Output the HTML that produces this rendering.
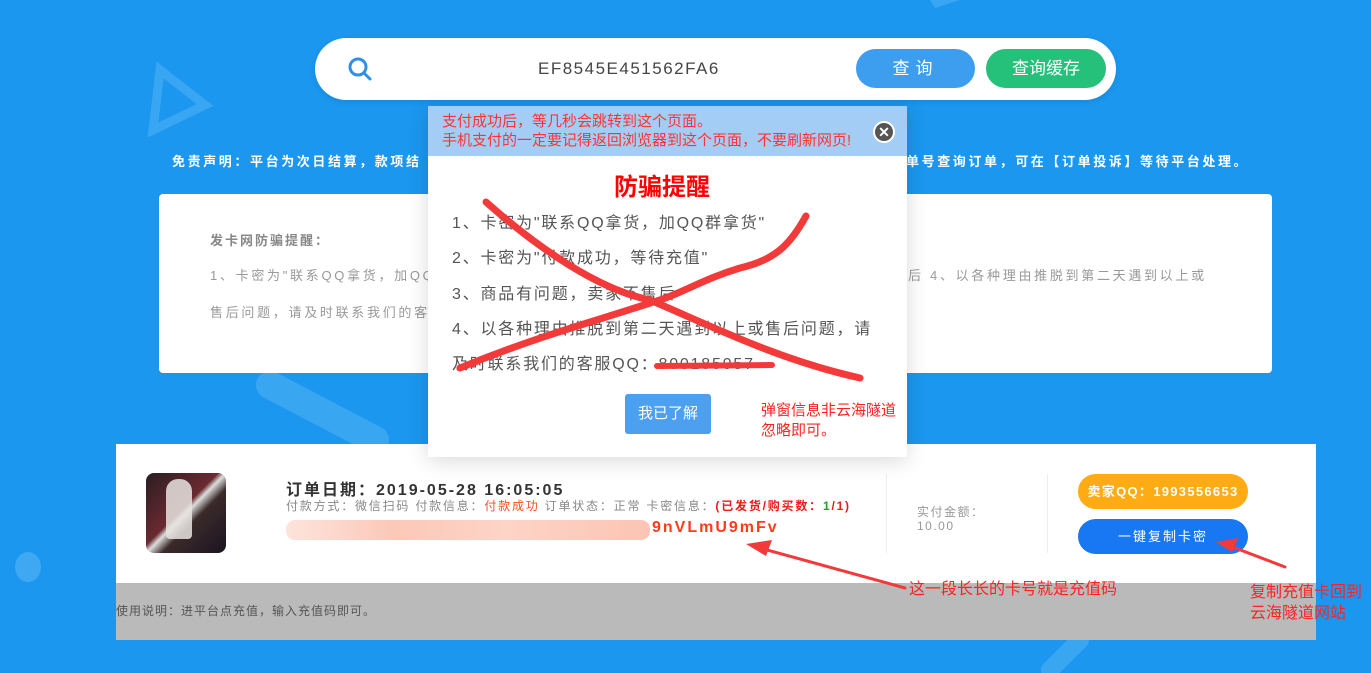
<!DOCTYPE html>
<html><head><meta charset="utf-8"><style>
*{margin:0;padding:0;box-sizing:border-box}
body{width:1371px;height:673px;overflow:hidden;background:#1b97ef;font-family:"Liberation Sans","Noto Sans CJK SC",sans-serif;position:relative}
.a{position:absolute;white-space:nowrap}
</style></head><body>
<svg class="a" style="left:0;top:0" width="1371" height="673">
<polygon points="160,70 205,105 153,130" fill="none" stroke="#4cb0f5" stroke-width="9" opacity=".6"/>
<line x1="270" y1="385" x2="375" y2="440" stroke="#4db0f3" stroke-width="28" stroke-linecap="round" opacity=".6"/>
<ellipse cx="28" cy="567" rx="13" ry="15" fill="#4db0f3" opacity=".7"/>
<line x1="1050" y1="670" x2="1080" y2="640" stroke="#4db0f3" stroke-width="18" stroke-linecap="round" opacity=".6"/>
<polygon points="930,0 960,0 935,8" fill="#4db0f3" opacity=".6"/>
</svg>
<div class="a" style="left:315px;top:38px;width:801px;height:62px;background:#fff;border-radius:31px;box-shadow:0 2px 6px rgba(0,0,0,.1)"></div>
<svg class="a" style="left:347px;top:56px" width="26" height="26"><circle cx="11" cy="11" r="8" fill="none" stroke="#2f8fe8" stroke-width="3"/><line x1="17" y1="17" x2="23" y2="23" stroke="#2f8fe8" stroke-width="3" stroke-linecap="round"/></svg>
<div class="a" style="left:538px;top:59px;font-size:17px;color:#444;letter-spacing:1.5px">EF8545E451562FA6</div>
<div class="a" style="left:856px;top:49px;width:119px;height:39px;background:#3d9ef0;border-radius:20px;color:#fff;font-size:17px;text-align:center;line-height:39px;letter-spacing:6px">查询</div>
<div class="a" style="left:986px;top:49px;width:120px;height:39px;background:#25c07a;border-radius:20px;color:#fff;font-size:17px;text-align:center;line-height:39px">查询缓存</div>
<div class="a" style="left:172px;top:151px;font-size:13px;color:#fff;font-weight:bold;letter-spacing:2.6px">免责声明：平台为次日结算，款项结</div>
<div class="a" style="left:906px;top:151px;font-size:13px;color:#fff;font-weight:bold;letter-spacing:2.6px">单号查询订单，可在【订单投诉】等待平台处理。</div>
<div class="a" style="left:159px;top:194px;width:1113px;height:179px;background:#fff;border-radius:4px"></div>
<div class="a" style="left:210px;top:230px;font-size:13px;color:#888;font-weight:bold;letter-spacing:2px">发卡网防骗提醒：</div>
<div class="a" style="left:210px;top:265px;font-size:13px;color:#999;letter-spacing:2.7px">1、卡密为"联系QQ拿货，加QQ</div>
<div class="a" style="left:908px;top:265px;font-size:13px;color:#999;letter-spacing:2.7px">后 4、以各种理由推脱到第二天遇到以上或</div>
<div class="a" style="left:210px;top:302px;font-size:13px;color:#999;letter-spacing:2.7px">售后问题，请及时联系我们的客</div>
<div class="a" style="left:116px;top:444px;width:1200px;height:196px;background:#fff"></div>
<div class="a" style="left:116px;top:583px;width:1200px;height:57px;background:#bababa"></div>
<div class="a" style="left:146px;top:473px;width:80px;height:80px;border-radius:8px;background:linear-gradient(135deg,#2a1d22,#6a2a30 45%,#ddd 50%,#3b2a2a 60%,#1a1420);overflow:hidden"><div style="position:absolute;left:20px;top:6px;width:26px;height:60px;background:#e8e4e0;border-radius:12px 12px 4px 4px;opacity:.85"></div></div>
<div class="a" style="left:286px;top:476px;font-size:16px;color:#333;font-weight:bold;letter-spacing:2px">订单日期：2019-05-28 16:05:05</div>
<div class="a" style="left:286px;top:497px;font-size:12px;color:#888;letter-spacing:1.8px">付款方式：微信扫码 付款信息：<span style="color:#ff4d1a">付款成功</span> 订单状态：正常 卡密信息：<b style="color:#f01a1a">(已发货/购买数：<span style="color:#2a9a2a">1</span>/1)</b></div>
<div class="a" style="left:286px;top:520px;width:364px;height:20px;border-radius:9px;background:linear-gradient(90deg,#fde4dc,#fcc8b8 30%,#fdd4c6 60%,#fcc4b4)"></div>
<div class="a" style="left:652px;top:519px;font-size:16px;color:#ff3c1a;font-weight:bold;letter-spacing:2px">9nVLmU9mFv</div>
<div class="a" style="left:886px;top:474px;width:1px;height:79px;background:#eee"></div>
<div class="a" style="left:1047px;top:474px;width:1px;height:79px;background:#eee"></div>
<div class="a" style="left:917px;top:505px;font-size:12px;color:#999;letter-spacing:1.5px;line-height:14px">实付金额：<br>10.00</div>
<div class="a" style="left:1078px;top:474px;width:170px;height:35px;background:#ffac14;border-radius:18px;color:#fff;font-size:13px;text-align:center;line-height:35px;letter-spacing:1.3px;font-weight:bold">卖家QQ：1993556653</div>
<div class="a" style="left:1078px;top:519px;width:170px;height:35px;background:#1877f2;border-radius:18px;color:#fff;font-size:13px;text-align:center;line-height:35px;letter-spacing:2px">一键复制卡密</div>
<div class="a" style="left:116px;top:602px;font-size:12px;color:#555;letter-spacing:1px">使用说明：进平台点充值，输入充值码即可。</div>
<div class="a" style="left:428px;top:106px;width:479px;height:351px;background:#fff;box-shadow:0 4px 20px rgba(0,0,0,.15)"></div>
<div class="a" style="left:428px;top:106px;width:479px;height:50px;background:#a3cdf5"></div>
<div class="a" style="left:442px;top:112px;font-size:15px;color:#f33;line-height:19px">支付成功后，等几秒会跳转到这个页面。<br>手机支付的一定要记得返回浏览器到这个页面，不要刷新网页!</div>
<div class="a" style="left:873px;top:121px;width:22px;height:22px;border-radius:50%;background:#555;border:2px solid #fff;color:#fff;font-size:14px;font-weight:bold;text-align:center;line-height:18px">✕</div>
<div class="a" style="left:614px;top:167px;font-size:24px;color:#f00;font-weight:bold">防骗提醒</div>
<div class="a" style="left:452px;top:206px;font-size:16px;color:#555;line-height:35.3px;letter-spacing:1.8px">1、卡密为"联系QQ拿货，加QQ群拿货"<br>2、卡密为"付款成功，等待充值"<br>3、商品有问题，卖家不售后<br>4、以各种理由推脱到第二天遇到以上或售后问题，请<br>及时联系我们的客服QQ：800185057</div>
<div class="a" style="left:625px;top:394px;width:86px;height:40px;background:#4d9ff0;border-radius:3px;color:#fff;font-size:15px;text-align:center;line-height:40px">我已了解</div>
<div class="a" style="left:761px;top:401px;font-size:15px;color:#f22;line-height:20px">弹窗信息非云海隧道<br>忽略即可。</div>
<svg class="a" style="left:0;top:0" width="1371" height="673">
<g fill="none" stroke="#f23a3a" stroke-linecap="round">
<path d="M486,202 C540,250 600,290 650,300 C720,330 780,360 860,378" stroke-width="7"/>
<path d="M806,216 C790,245 775,260 740,268 C700,280 680,295 650,303 C600,320 540,335 460,368" stroke-width="7"/>
<path d="M657,366 L772,365" stroke-width="6"/>
<path d="M905,588 L760,548" stroke-width="3"/>
<path d="M1285,567 L1230,546" stroke-width="3"/>
</g>
<polygon points="746,544 772,540 766,556" fill="#f23a3a"/>
<polygon points="1216,542 1238,538 1232,552" fill="#f23a3a"/>
</svg>
<div class="a" style="left:909px;top:575px;font-size:16px;color:#f22">这一段长长的卡号就是充值码</div>
<div class="a" style="left:1250px;top:582px;font-size:16px;color:#f22;line-height:21px">复制充值卡回到<br>云海隧道网站</div>
</body></html>
